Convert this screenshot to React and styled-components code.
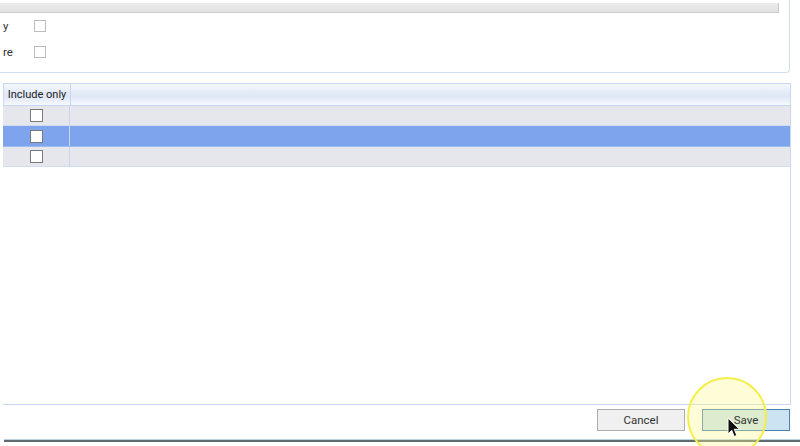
import React from 'react'
import styled, { createGlobalStyle } from 'styled-components'

const Global = createGlobalStyle`
  html, body { margin: 0; padding: 0; background: #fff; }
  body { font-family: Roboto, "Open Sans", sans-serif; font-size: 11px; color: #222; }
`

const Page = styled.div`
  width: 800px;
  height: 446px;
  overflow: hidden;
  display: flex;
  flex-direction: column;
`

const GroupBox = styled.div`
  margin-left: -10px;
  width: 800px;
  height: 73px;
  box-sizing: border-box;
  border: 1px solid #cfdcf2;
  border-top: none;
  border-radius: 0 0 4px 4px;
  display: flex;
  flex-direction: column;
`

const ClippedHeader = styled.div`
  margin: 3px 0 0 0;
  width: 787px;
  height: 9px;
  background: linear-gradient(#ececec, #e2e2e2);
  border-right: 1px solid #c8c8c8;
  border-bottom: 1px solid #cfcfcf;
`

const OptionRow = styled.div`
  display: flex;
  align-items: center;
  height: 26px;
  padding-left: 12px;
`

const OptionLabel = styled.span`
  width: 31px;
  font-size: 11.5px;
  color: #333;
`

const Check = styled.span`
  display: inline-block;
  box-sizing: border-box;
  width: ${p => p.$size || 12}px;
  height: ${p => p.$size || 12}px;
  background: #fff;
  border: 1px solid ${p => p.$dark ? '#7a7a7a' : '#bdbdbd'};
`

const Grid = styled.div`
  margin: 10px 0 0 3px;
  width: 788px;
  height: 322px;
  box-sizing: border-box;
  border: 1px solid #c7d6f1;
  border-left: none;
  display: flex;
  flex-direction: column;
`

const HeaderRow = styled.div`
  display: flex;
  height: 22px;
  box-sizing: border-box;
  background: linear-gradient(#f5f8fd 0%, #e3eaf7 45%, #dfe7f6 60%, #f6f9fe 100%);
  border-bottom: 1px solid #c7d6f1;
`

const HeaderCell = styled.div`
  width: ${p => p.$w ? `${p.$w}px` : 'auto'};
  flex: ${p => p.$w ? 'none' : 1};
  box-sizing: border-box;
  border-left: ${p => p.$first ? '1px solid #c7d6f1' : 'none'};
  border-right: ${p => p.$w ? '1px solid #c7d6f1' : 'none'};
  display: flex;
  align-items: center;
  justify-content: center;
  font-size: 11px;
  color: #222;
`

const Row = styled.div`
  display: flex;
  height: ${p => p.$h}px;
  background: ${p => p.$selected ? '#7da4ec' : '#e6e7ec'};
  border-bottom: 1px solid ${p => p.$selected ? '#9cbcf0' : '#d0dcf1'};
  box-sizing: border-box;
`

const Cell = styled.div`
  width: ${p => p.$w ? `${p.$w}px` : 'auto'};
  flex: ${p => p.$w ? 'none' : 1};
  box-sizing: border-box;
  border-right: ${p => p.$w ? '1px solid #c7d6f1' : 'none'};
  display: flex;
  align-items: center;
  justify-content: center;
`

const Footer = styled.div`
  display: flex;
  justify-content: flex-end;
  gap: 17px;
  padding: 4px 10px 0 0;
`

const Button = styled.div`
  position: relative;
  width: 88px;
  height: 22px;
  box-sizing: border-box;
  border: 1px solid ${p => p.$primary ? '#4f7eaa' : '#adadad'};
  background: ${p => p.$primary ? '#cbe3f3' : '#f0f0f0'};
  display: flex;
  align-items: center;
  justify-content: center;
  font-size: 11.5px;
  color: #333;
`

const Highlight = styled.div`
  position: absolute;
  left: -16px;
  top: -33px;
  width: 80px;
  height: 80px;
  border-radius: 50%;
  box-sizing: border-box;
  border: 2px solid #f3ef4a;
  background: rgba(255, 250, 140, 0.35);
  pointer-events: none;
`

const ButtonLabel = styled.span`
  position: relative;
  z-index: 1;
`

const Cursor = styled.svg`
  position: absolute;
  left: 24px;
  top: 7px;
  z-index: 2;
`

const BottomEdge = styled.div`
  margin: 8px 0 0 4px;
  height: 2px;
  border-top: 1px solid #b9d3e6;
  background: #5f6b70;
`

const rows = [20, 21, 20]

export default function App() {
  return (
    <Page>
      <Global />
      <GroupBox>
        <ClippedHeader />
        <OptionRow>
          <OptionLabel>y</OptionLabel>
          <Check />
        </OptionRow>
        <OptionRow>
          <OptionLabel>re</OptionLabel>
          <Check />
        </OptionRow>
      </GroupBox>
      <Grid>
        <HeaderRow>
          <HeaderCell $w={68} $first>Include only</HeaderCell>
          <HeaderCell />
        </HeaderRow>
        {rows.map((h, i) => (
          <Row key={i} $h={h} $selected={i === 1}>
            <Cell $w={67}><Check $size={13} $dark /></Cell>
            <Cell />
          </Row>
        ))}
      </Grid>
      <Footer>
        <Button>Cancel</Button>
        <Button $primary>
          <Highlight />
          <ButtonLabel>Save</ButtonLabel>
          <Cursor width="14" height="21" viewBox="0 0 14 21">
            <path d="M1 1 L1 17 L4.7 13.3 L7.2 19.5 L9.8 18.4 L7.3 12.3 L12.5 12.3 Z" fill="#111" stroke="#fff" strokeWidth="1" />
          </Cursor>
        </Button>
      </Footer>
      <BottomEdge />
    </Page>
  )
}
